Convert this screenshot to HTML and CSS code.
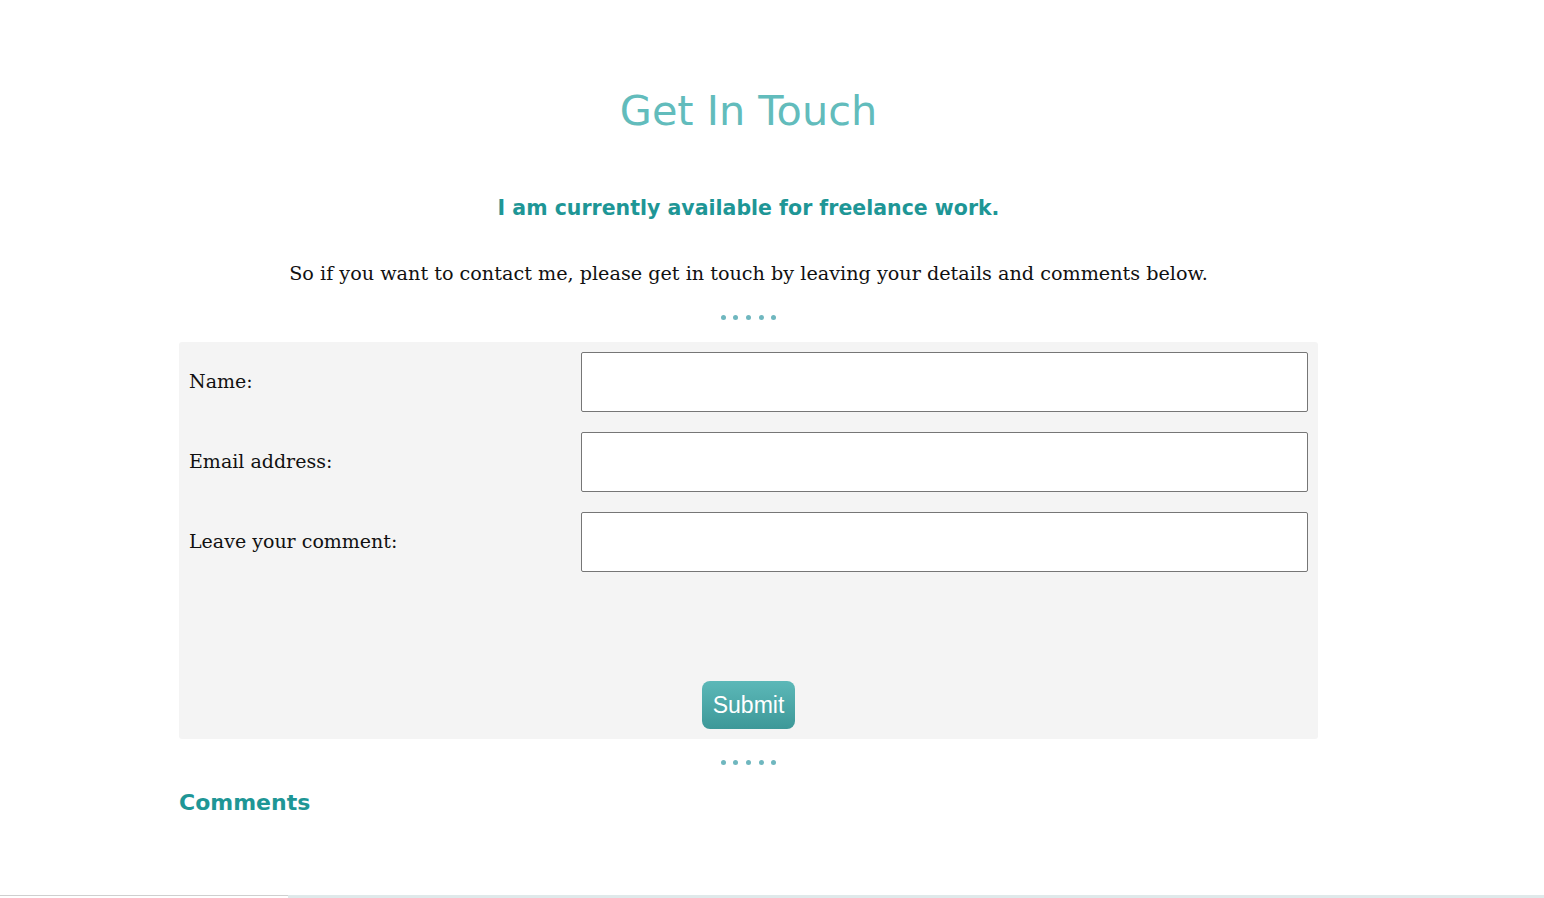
FILE: index.html
```html
<!DOCTYPE html>
<html lang="en">
<head>
<meta charset="utf-8">
<title>Get In Touch</title>
<link rel="stylesheet" href="styles.css">
</head>
<body>
<main class="page">
  <section class="contact">
    <h1 class="title">Get In Touch</h1>
    <h2 class="subtitle">I am currently available for freelance work.</h2>
    <p class="intro">So if you want to contact me, please get in touch by leaving your details and comments below.</p>
    <div class="dots"><span></span><span></span><span></span><span></span><span></span></div>
    <form class="form">
      <label class="label" for="name">Name:</label>
      <input class="field" id="name" type="text">
      <label class="label" for="email">Email address:</label>
      <input class="field" id="email" type="email">
      <label class="label" for="comment">Leave your comment:</label>
      <input class="field" id="comment" type="text">
      <div class="actions"><button class="submit" type="button">Submit</button></div>
    </form>
    <div class="dots dots-after"><span></span><span></span><span></span><span></span><span></span></div>
    <h3 class="comments">Comments</h3>
  </section>
</main>
<footer class="footer"><div class="footer-left"></div><div class="footer-right"></div></footer>
</body>
</html>
```
FILE: styles.css
```css
html, body {
  margin: 0;
  padding: 0;
  background: #ffffff;
}
body {
  height: 898px;
  overflow: hidden;
  position: relative;
}
.page {
  padding-top: 84px;
}
.contact {
  width: 1139px;
  margin-left: 179px;
  display: flex;
  flex-direction: column;
}
.title {
  margin: 0;
  text-align: center;
  font-family: "DejaVu Sans", sans-serif;
  font-weight: 400;
  font-size: 41.4px;
  line-height: 54px;
  color: #62bcbc;
}
.subtitle {
  margin: 55px 0 0;
  text-align: center;
  font-family: "DejaVu Sans", sans-serif;
  font-weight: 700;
  font-size: 20.5px;
  line-height: 30px;
  color: #1e9696;
}
.intro {
  margin: 36px 0 0;
  text-align: center;
  font-family: "DejaVu Serif", serif;
  font-size: 19.2px;
  line-height: 30px;
  color: #111;
}
.dots {
  display: flex;
  justify-content: center;
  gap: 7.7px;
  margin-top: 26px;
  height: 5px;
}
.dots span {
  width: 5px;
  height: 5px;
  border-radius: 50%;
  background: #6fb7bf;
}
.form {
  margin-top: 22px;
  background: #f4f4f4;
  border-radius: 3px;
  padding: 10px;
  display: grid;
  grid-template-columns: 392px 727px;
  row-gap: 20px;
  align-items: center;
}
.label {
  font-family: "DejaVu Serif", serif;
  font-size: 19px;
  line-height: 26px;
  padding-bottom: 2px;
  color: #111;
}
.field {
  box-sizing: border-box;
  width: 727px;
  height: 60px;
  border: 1px solid #767676;
  border-radius: 2px;
  background: #fff;
  margin: 0;
}
.actions {
  grid-column: 1 / 3;
  display: flex;
  justify-content: center;
  padding-top: 89px;
}
.submit {
  width: 93px;
  height: 48px;
  border: none;
  border-radius: 8px;
  background: linear-gradient(#5cb8b8, #3d9898);
  color: #fff;
  font-family: "Liberation Sans", Arial, sans-serif;
  font-size: 23px;
  padding: 0;
}
.dots-after {
  margin-top: 21px;
}
.comments {
  margin: 23px 0 0;
  font-family: "DejaVu Sans", sans-serif;
  font-weight: 700;
  font-size: 22px;
  line-height: 30px;
  color: #1e9696;
}
.footer {
  position: absolute;
  left: 0;
  right: 0;
  bottom: 0;
  height: 3px;
  display: flex;
}
.footer-left {
  width: 288px;
  border-top: 1px solid #cfcfcf;
}
.footer-right {
  flex: 1;
  background: #dfe9ea;
}
```
